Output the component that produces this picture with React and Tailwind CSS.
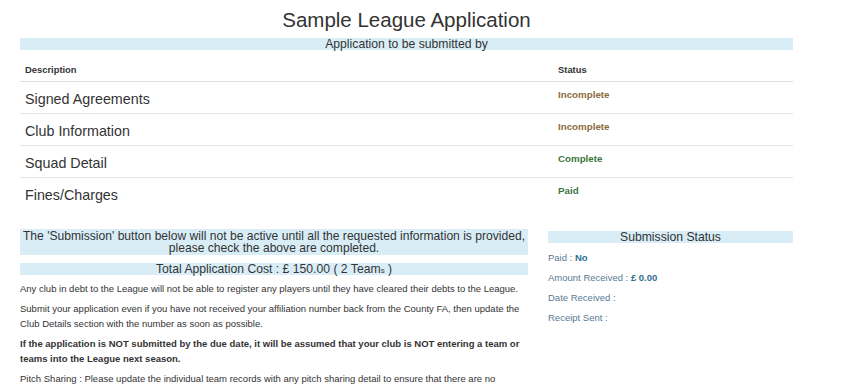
export default function App() {
  const rows = [
    { name: "Signed Agreements", status: "Incomplete", color: "text-[#8a6d3b]" },
    { name: "Club Information", status: "Incomplete", color: "text-[#8a6d3b]" },
    { name: "Squad Detail", status: "Complete", color: "text-[#3c763d]" },
    { name: "Fines/Charges", status: "Paid", color: "text-[#3c763d]" },
  ];

  return (
    <div className="min-h-screen bg-white text-[#333] font-['Liberation_Sans',Arial,sans-serif] overflow-hidden">
      <div className="ml-[20px] w-[773px]">
        {/* Title */}
        <h1 className="text-center text-[20.5px] leading-[25px] pt-[7px] pb-[6px]">Sample League Application</h1>
        <div className="bg-[#d9edf7] text-center text-[12.2px] leading-[12px] h-[12px]">Application to be submitted by</div>

        {/* Status table */}
        <div className="flex h-[32px] items-end border-b border-[#ddd] text-[9.4px] leading-[14px] font-bold pb-[4px]">
          <div className="w-[532px] pl-[5px]">Description</div>
          <div className="pl-[6px]">Status</div>
        </div>
        {rows.map((r, i) => (
          <div key={r.name} className={`flex h-[32px] ${i < rows.length - 1 ? "border-b border-[#e5e5e5]" : ""}`}>
            <div className="w-[532px] pl-[5px] pt-[7px] text-[14.3px] leading-[20px]">{r.name}</div>
            <div className={`pl-[6px] pt-[6px] text-[9.75px] leading-[14px] font-bold ${r.color}`}>{r.status}</div>
          </div>
        ))}

        {/* Lower section */}
        <div className="flex gap-[20px] mt-[19px]">
          <div className="w-[508px]">
            <div className="bg-[#d9edf7] text-center text-[12.1px] leading-[12px] py-[1px]">
              The 'Submission' button below will not be active until all the requested information is provided, please check the above are completed.
            </div>
            <div className="bg-[#d9edf7] text-center text-[12.2px] leading-[12px] h-[12px] mt-[8px]">
              Total Application Cost : £ 150.00 ( 2 Team<span className="text-[8px]">s</span> )
            </div>
            <div className="text-[9.5px] leading-[15px] mt-[6px]">
              <p className="mb-[5px]">Any club in debt to the League will not be able to register any players until they have cleared their debts to the League.</p>
              <p className="mb-[5px]">Submit your application even if you have not received your affiliation number back from the County FA, then update the Club Details section with the number as soon as possible.</p>
              <p className="mb-[5px] font-bold">If the application is NOT submitted by the due date, it will be assumed that your club is NOT entering a team or teams into the League next season.</p>
              <p className="mb-[5px]">Pitch Sharing : Please update the individual team records with any pitch sharing detail to ensure that there are no possible fixture clashes between sharing teams. The League management ensure that clubs will not concede team points.</p>
            </div>
          </div>
          <div className="w-[245px] pt-[2px]">
            <div className="bg-[#d9edf7] text-center text-[12.2px] leading-[12px] h-[12px]">Submission Status</div>
            <div className="text-[9.5px] leading-[15px] text-[#5a7a94] mt-[7px] flex flex-col gap-[5px]">
              <div>Paid : <span className="font-bold text-[#31708f]">No</span></div>
              <div>Amount Received : <span className="font-bold text-[#31708f]">£ 0.00</span></div>
              <div>Date Received :</div>
              <div>Receipt Sent :</div>
            </div>
          </div>
        </div>
      </div>
    </div>
  );
}
